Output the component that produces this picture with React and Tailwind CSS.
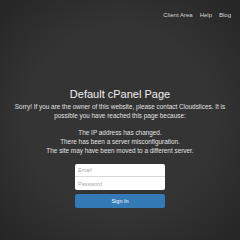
import React from "react";

function NavBar() {
  return (
    <div className="flex justify-end gap-[7px] pr-[9px] pt-[11px] text-[6px] text-[#d4d4d4]">
      <a className="cursor-pointer">Client Area</a>
      <a className="cursor-pointer">Help</a>
      <a className="cursor-pointer">Blog</a>
    </div>
  );
}

export default function App() {
  return (
    <div
      className="h-[240px] w-[240px] overflow-hidden bg-[radial-gradient(ellipse_at_center,#343434_55%,#252525_100%)]"
      style={{ fontFamily: '"Liberation Sans", Arial, sans-serif' }}
    >
      <NavBar />
      <div className="mt-[67px] flex flex-col items-center text-center">
        <h1 className="text-[11px] leading-[14px] text-[#f0f0f0]">Default cPanel Page</h1>
        <p className="mt-[1px] text-[6.4px] leading-[9px] text-[#e0e0e0]">
          Sorry! If you are the owner of this website, please contact Cloudslices. It is
          <br />
          possible you have reached this page because:
        </p>
        <p className="mt-[8px] text-[6.4px] leading-[9px] text-[#e0e0e0]">
          The IP address has changed.
          <br />
          There has been a server misconfiguration.
          <br />
          The site may have been moved to a different server.
        </p>
        <form className="mt-[9px] flex w-[90px] flex-col">
          <div className="flex flex-col overflow-hidden rounded-[2px] bg-white">
            <input
              placeholder="Email"
              className="h-[13px] border-b border-[#d8d8d8] px-[3px] text-[5.5px] text-[#555] outline-none placeholder:text-[#aaa]"
            />
            <input
              placeholder="Password"
              type="password"
              className="h-[13px] px-[3px] text-[5.5px] text-[#555] outline-none placeholder:text-[#aaa]"
            />
          </div>
          <button
            type="button"
            className="mt-[4px] h-[14px] rounded-[2px] bg-[#337ab7] text-[5.5px] text-white"
          >
            Sign In
          </button>
        </form>
      </div>
    </div>
  );
}
